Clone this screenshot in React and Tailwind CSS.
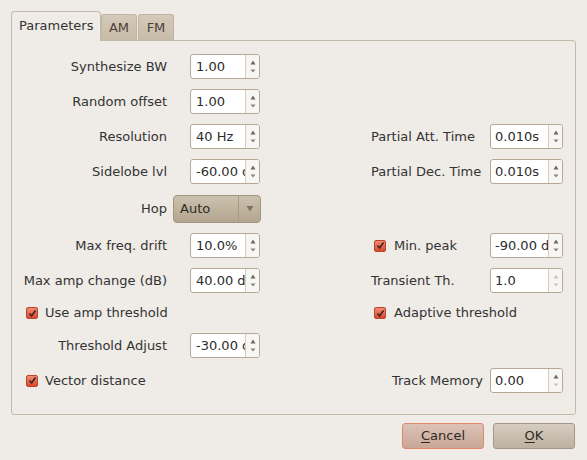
import React from 'react'

function Arrows({ upOff, downOff }) {
  return (
    <div className="flex w-[14px] flex-col items-center justify-between border-l border-[#d6cec2] bg-[#f8f6f3] py-[5px]">
      <svg width="6" height="5" viewBox="0 0 6 5">
        <path d="M3 0.5 L5.5 4.5 L0.5 4.5 Z" fill={upOff ? '#cdc6bb' : '#6e665c'} />
      </svg>
      <svg width="6" height="4" viewBox="0 0 6 4">
        <path d="M0.5 0.5 L5.5 0.5 L3 3.5 Z" fill={downOff ? '#cdc6bb' : '#8a8277'} />
      </svg>
    </div>
  )
}

function Spin({ value, wide, upOff, downOff }) {
  return (
    <div
      className={
        (wide ? 'w-[73px] ' : 'w-[70px] ') +
        'flex h-[25px] overflow-hidden rounded-[3px] border border-[#b5a894] bg-white'
      }
    >
      <div
        className={
          (wide ? 'pl-[4px] ' : 'pl-[5px] ') +
          'flex-1 overflow-hidden whitespace-nowrap leading-[23px] text-[#2c2c2c]'
        }
      >
        {value}
      </div>
      <Arrows upOff={upOff} downOff={downOff} />
    </div>
  )
}

function Check() {
  return (
    <span className="flex h-[12px] w-[12px] items-center justify-center rounded-[2px] border border-[#b9452f] bg-gradient-to-b from-[#f28a70] to-[#d9462c]">
      <svg width="9" height="9" viewBox="0 0 9 9">
        <path d="M1.5 4.5 L3.6 7 L7.5 1.5" stroke="#3a2520" strokeWidth="1.6" fill="none" />
      </svg>
    </span>
  )
}

function LeftSpin({ label, value }) {
  return (
    <div className="flex w-[359px] items-center">
      <span className="w-[155px] text-right">{label}</span>
      <span className="ml-[23px]">
        <Spin value={value} />
      </span>
    </div>
  )
}

function RightSpin({ label, value, upOff, downOff, alignRight }) {
  return (
    <div className="flex items-center">
      <span className={alignRight ? 'w-[119px] pr-[7px] text-right' : 'w-[119px]'}>{label}</span>
      <Spin value={value} wide upOff={upOff} downOff={downOff} />
    </div>
  )
}

export default function App() {
  return (
    <div className="h-[460px] w-[587px] bg-[#efebe7] pt-[11px] font-['DejaVu_Sans',sans-serif] text-[13px] text-[#333]">
      <div className="flex h-[29px] items-end pl-[11px]">
        <div className="relative z-10 -mb-px flex h-[30px] w-[90px] items-center rounded-t-[4px] border-x border-t border-[#c4baa9] bg-[#efebe7] pb-[2px] pl-[7px]">
          Parameters
        </div>
        <div className="flex h-[26px] w-[36px] items-center justify-center rounded-t-[3px] border-x border-t border-[#bfb3a1] bg-gradient-to-b from-[#d4cab9] to-[#c8bca9] text-[#4a4038]">
          AM
        </div>
        <div className="ml-px flex h-[26px] w-[36px] items-center justify-center rounded-t-[3px] border-x border-t border-[#bfb3a1] bg-gradient-to-b from-[#d4cab9] to-[#c8bca9] text-[#4a4038]">
          FM
        </div>
      </div>

      <div className="mx-[11px] flex h-[375px] flex-col gap-[10px] rounded-b-[3px] rounded-tr-[3px] border border-[#c4baa9] pt-[13px]">
        <div className="flex h-[25px] items-center">
          <LeftSpin label="Synthesize BW" value="1.00" />
        </div>
        <div className="flex h-[25px] items-center">
          <LeftSpin label="Random offset" value="1.00" />
        </div>
        <div className="flex h-[25px] items-center">
          <LeftSpin label="Resolution" value="40 Hz" />
          <RightSpin label="Partial Att. Time" value="0.010s" />
        </div>
        <div className="flex h-[25px] items-center">
          <LeftSpin label="Sidelobe lvl" value="-60.00 dB" />
          <RightSpin label="Partial Dec. Time" value="0.010s" />
        </div>
        <div className="flex h-[29px] items-center">
          <span className="w-[155px] text-right">Hop</span>
          <div className="ml-[6px] flex h-[28px] w-[88px] items-center rounded-[4px] border border-[#a39580] bg-gradient-to-b from-[#ccc1ae] to-[#b3a68f] text-[#2e2a25]">
            <span className="flex-1 pl-[6px]">Auto</span>
            <span className="flex h-full w-[22px] items-center justify-center border-l border-[#a89a85]">
              <svg width="8" height="7" viewBox="0 0 8 7">
                <path d="M0.5 1 L7.5 1 L4 6.5 Z" fill="#7c7163" />
              </svg>
            </span>
          </div>
        </div>
        <div className="flex h-[25px] items-center">
          <LeftSpin label="Max freq. drift" value="10.0%" />
          <div className="flex items-center">
            <span className="flex w-[119px] items-center pl-[3px]">
              <Check />
              <span className="ml-[8px]">Min. peak</span>
            </span>
            <Spin value="-90.00 dB" wide />
          </div>
        </div>
        <div className="flex h-[25px] items-center">
          <LeftSpin label="Max amp change (dB)" value="40.00 dB" />
          <RightSpin label="Transient Th." value="1.0" upOff downOff />
        </div>
        <div className="flex h-[20px] items-center">
          <div className="flex w-[359px] items-center pl-[14px]">
            <Check />
            <span className="ml-[7px]">Use amp threshold</span>
          </div>
          <div className="flex items-center pl-[3px]">
            <Check />
            <span className="ml-[8px]">Adaptive threshold</span>
          </div>
        </div>
        <div className="flex h-[25px] items-center">
          <LeftSpin label="Threshold Adjust" value="-30.00 dB" />
        </div>
        <div className="flex h-[25px] items-center">
          <div className="flex w-[359px] items-center pl-[14px]">
            <Check />
            <span className="ml-[7px]">Vector distance</span>
          </div>
          <RightSpin label="Track Memory" value="0.00" downOff alignRight />
        </div>
      </div>

      <div className="mt-[8px] flex justify-end gap-[9px] pr-[12px]">
        <button className="flex h-[26px] w-[82px] items-center justify-center rounded-[3px] border border-[#e3876c] bg-gradient-to-b from-[#dcc2b6] to-[#c9a797] text-[#2e2a25]">
          <span>
            <span className="underline underline-offset-2">C</span>ancel
          </span>
        </button>
        <button className="flex h-[26px] w-[82px] items-center justify-center rounded-[3px] border border-[#a4978a] bg-gradient-to-b from-[#d6cdc0] to-[#bdb1a0] text-[#2e2a25]">
          <span>
            <span className="underline underline-offset-2">O</span>K
          </span>
        </button>
      </div>
    </div>
  )
}
